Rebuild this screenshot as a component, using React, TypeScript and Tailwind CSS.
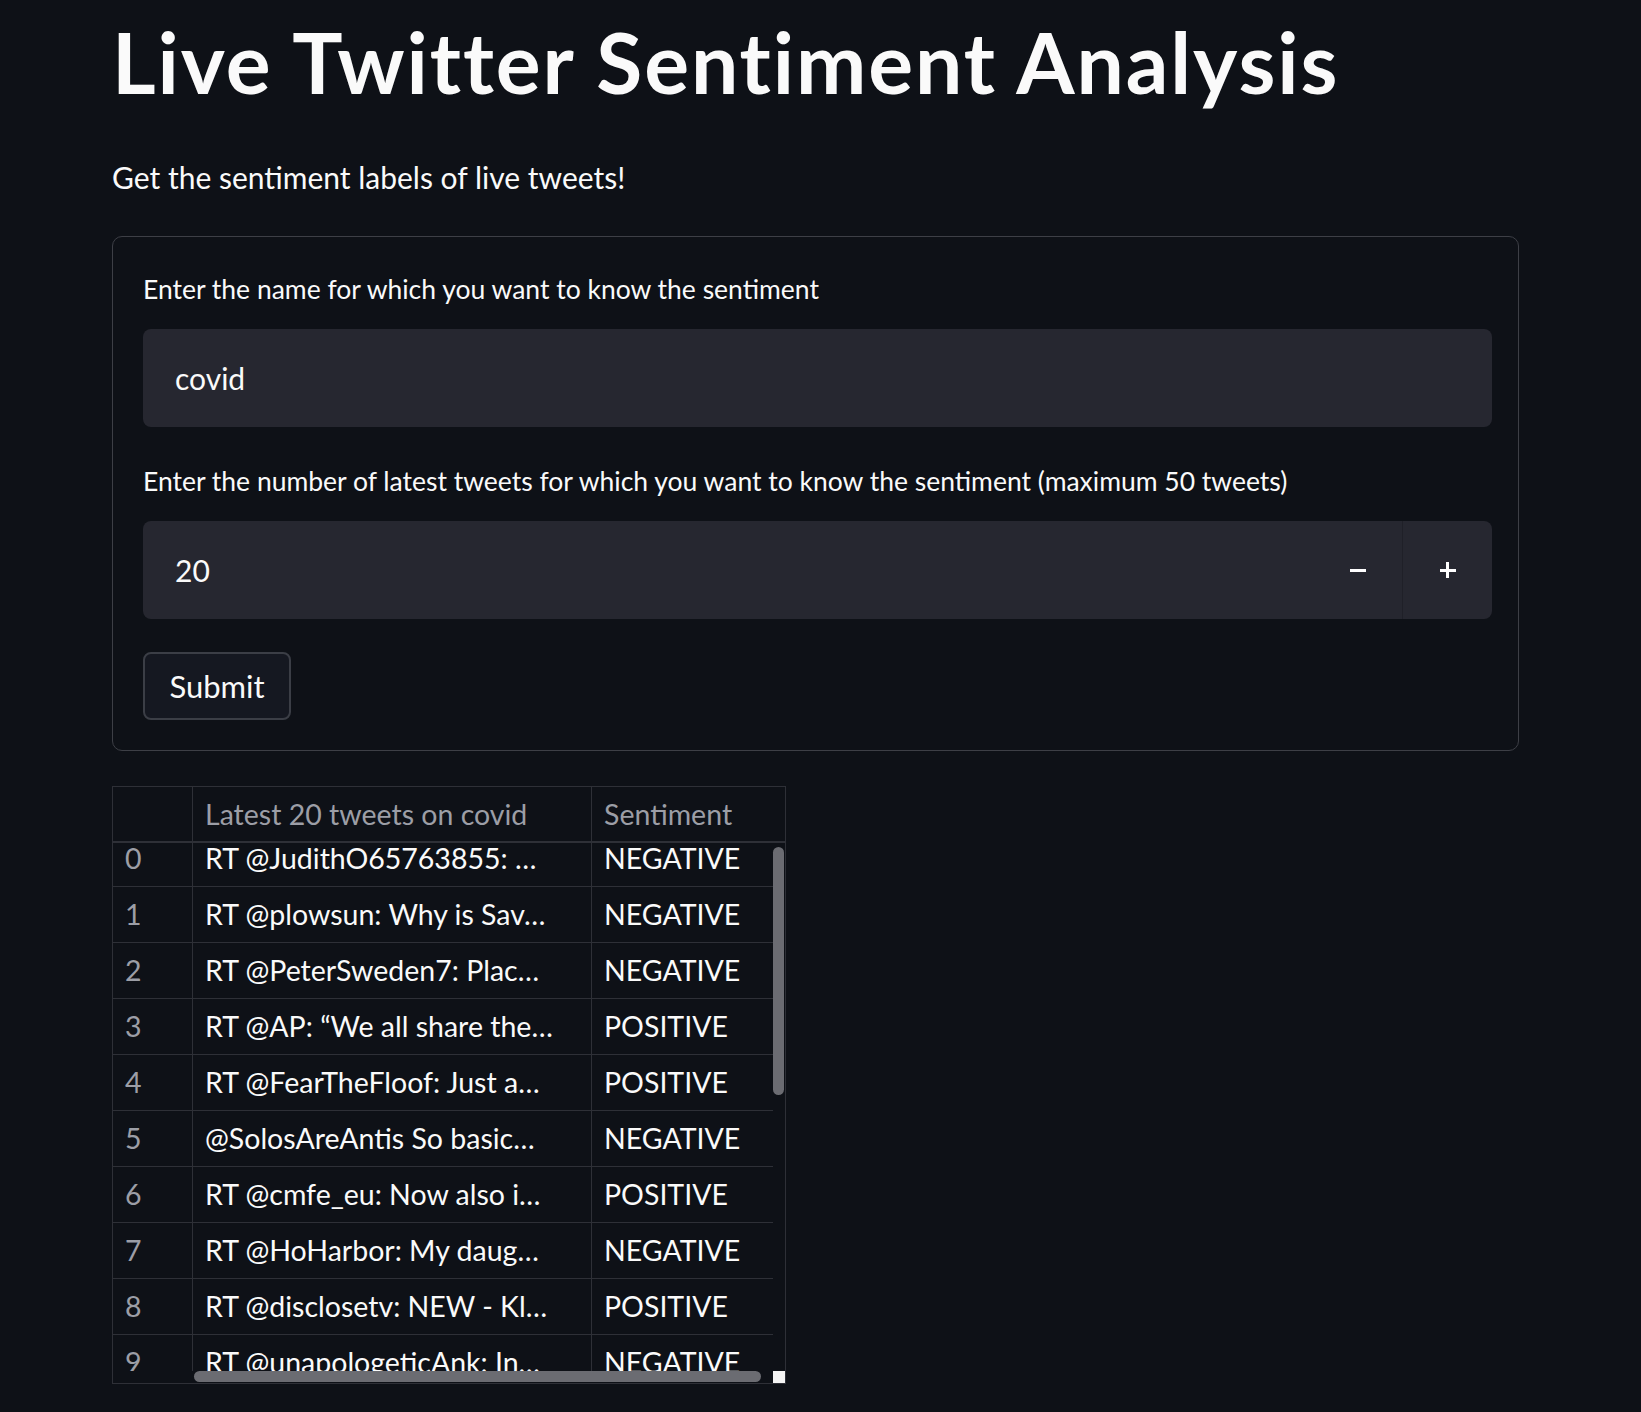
import React, { useState } from 'react'

const rows = [
  { i: 0, text: 'RT @JudithO65763855: …', label: 'NEGATIVE' },
  { i: 1, text: 'RT @plowsun: Why is Sav…', label: 'NEGATIVE' },
  { i: 2, text: 'RT @PeterSweden7: Plac…', label: 'NEGATIVE' },
  { i: 3, text: 'RT @AP: “We all share the…', label: 'POSITIVE' },
  { i: 4, text: 'RT @FearTheFloof: Just a…', label: 'POSITIVE' },
  { i: 5, text: '@SolosAreAntis So basic…', label: 'NEGATIVE' },
  { i: 6, text: 'RT @cmfe_eu: Now also i…', label: 'POSITIVE' },
  { i: 7, text: 'RT @HoHarbor: My daug…', label: 'NEGATIVE' },
  { i: 8, text: 'RT @disclosetv: NEW - Kl…', label: 'POSITIVE' },
  { i: 9, text: 'RT @unapologeticAnk: In…', label: 'NEGATIVE' },
]

export default function App(){
  const [name, setName] = useState('covid')
  const [count, setCount] = useState(20)

  return (
    <div className="min-h-[1412px] bg-[#0e1117] text-[#fafafa] font-['Lato',sans-serif]">
      <div className="pl-[112px] w-[1519px]">
        {/* Title */}
        <h1 className="pt-[12px] h-[130px] text-[84px] leading-[100px] font-bold tracking-[1.9px] whitespace-nowrap">Live Twitter Sentiment Analysis</h1>

        <p className="h-[106px] text-[30px] leading-[38px] pt-[28px]">Get the sentiment labels of live tweets!</p>

        {/* Form */}
        <div className="border border-[#3d3f46] rounded-[10px] h-[515px] pl-[30px] pr-[26px] flex flex-col">
          <div className="h-[92px] flex items-end pb-[19px] text-[26.5px]">Enter the name for which you want to know the sentiment</div>
          <input
            value={name}
            onChange={e=>setName(e.target.value)}
            className="h-[98px] w-full rounded-[8px] bg-[#262730] px-[32px] text-[30px] text-[#fafafa] outline-none"
          />
          <div className="h-[94px] flex items-end pb-[19px] text-[26.5px] whitespace-nowrap">Enter the number of latest tweets for which you want to know the sentiment (maximum 50 tweets)</div>
          <div className="h-[98px] w-full rounded-[8px] bg-[#262730] flex items-stretch overflow-hidden">
            <div className="flex-1 flex items-center px-[32px] text-[30px]">{count}</div>
            <button onClick={()=>setCount(Math.max(0, count-1))} className="w-[90px] flex items-center justify-center border-r border-[#1f2028]">
              <span className="block w-[16px] h-[3px] bg-white"></span>
            </button>
            <button onClick={()=>setCount(Math.min(50, count+1))} className="w-[89px] flex items-center justify-center relative">
              <span className="block w-[16px] h-[3px] bg-white"></span>
              <span className="absolute block w-[3px] h-[16px] bg-white"></span>
            </button>
          </div>
          <div className="pt-[33px]">
            <button className="h-[68px] w-[148px] rounded-[8px] border-2 border-[#3b3e46] bg-[#151821] text-[31px] text-[#fafafa]">Submit</button>
          </div>
        </div>

        {/* Table */}
        <div className="mt-[35px] w-[674px] h-[598px] border border-[#2e3037] flex flex-col relative">
          <div className="flex h-[56px] border-b-2 border-[#2e3037] text-[28.5px] text-[#9c9ea6]">
            <div className="w-[80px] border-r border-[#2e3037]"></div>
            <div className="w-[399px] border-r border-[#2e3037] flex items-center px-[12px]">Latest 20 tweets on covid</div>
            <div className="flex-1 flex items-center px-[12px]">Sentiment</div>
          </div>
          <div className="h-[528px] overflow-hidden">
            <div className="-mt-[12px] w-[660px]">
              {rows.map(r => (
                <div key={r.i} className="flex h-[56px] border-b border-[#2e3037] text-[28.5px]">
                  <div className="w-[80px] border-r border-[#2e3037] flex items-center px-[12px] text-[#9c9ea6]">{r.i}</div>
                  <div className="w-[399px] border-r border-[#2e3037] flex items-center px-[12px] whitespace-nowrap overflow-hidden">{r.text}</div>
                  <div className="flex-1 flex items-center px-[12px] whitespace-nowrap">{r.label}</div>
                </div>
              ))}
            </div>
          </div>
          {/* scrollbars */}
          <div className="absolute left-[81px] right-[24px] bottom-[1px] h-[11px] rounded-full bg-[#6b6c72]"></div>
          <div className="absolute right-[1px] top-[60px] w-[11px] h-[248px] rounded-full bg-[#6b6c72]"></div>
          <div className="absolute right-0 bottom-0 w-[12px] h-[12px] bg-[#f4f4f4]"></div>
        </div>
      </div>
    </div>
  )
}
